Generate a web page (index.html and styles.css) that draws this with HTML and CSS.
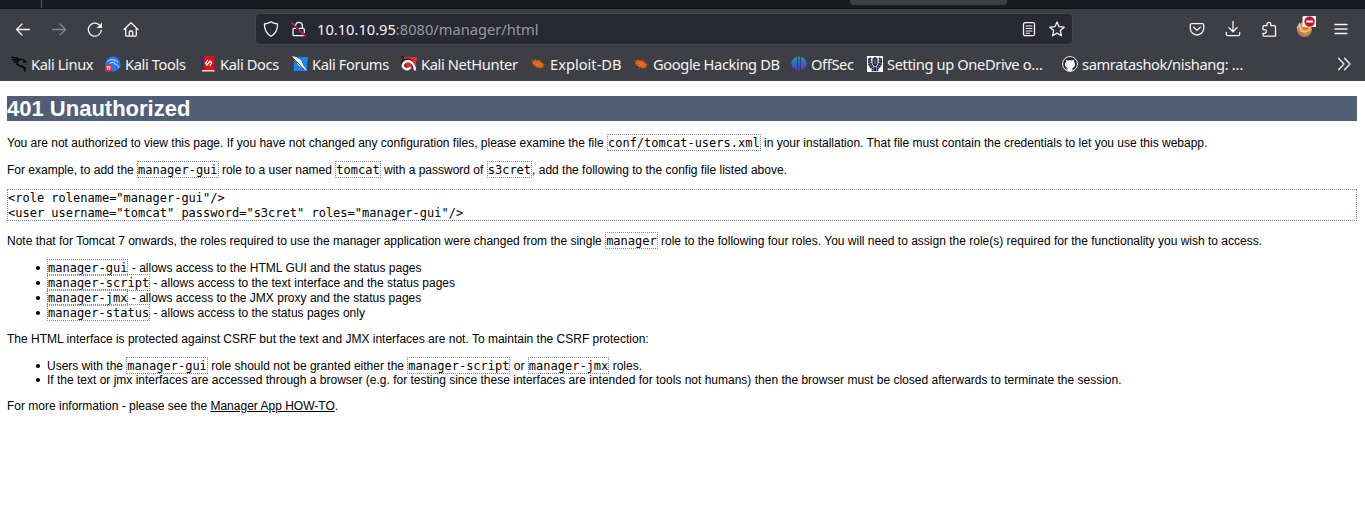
FILE: index.html
```
<!DOCTYPE html>
<html lang="en">
<head>
<meta charset="utf-8">
<title>401 Unauthorized</title>
<link rel="stylesheet" href="styles.css">
</head>
<body>
<header class="chrome">
  <div class="tabstrip"><span class="tab-divider"></span><span class="tab-pill"></span></div>
  <nav class="toolbar">
    <div class="nav-buttons">
      <svg class="icon" viewBox="0 0 16 16"><path d="M14.500 8.500H1.500M7 3 1.500 8.500 7 14"/></svg>
      <svg class="icon dim" viewBox="0 0 16 16"><path d="M1.500 8.500h13M9 3l5.500 5.500L9 14"/></svg>
      <svg class="icon" viewBox="0 0 16 16"><path d="M14.300 9.500A6.500 6.500 0 1 1 12.300 3.900"/><path class="solid" d="M15 1.500v5.500H9.500z"/></svg>
      <svg class="icon" viewBox="0 0 16 16"><path d="M1 8.500 8 1.700l7 6.800M2.700 7.300v7q0 .8.800.8h9q.8 0 .8-.8v-7M6.300 15v-4q0-1 1-1h1.400q1 0 1 1v4"/></svg>
    </div>
    <div class="urlbar">
      <svg class="icon shield" viewBox="0 0 16 16"><path d="M8 .8C6 2.300 3.800 2.700 1.400 3c0 5.300 1.600 9.500 6.600 12.200C13 12.500 14.600 8.300 14.600 3 12.200 2.700 10 2.300 8 .8z"/></svg>
      <svg class="icon lock" viewBox="0 0 16 16"><path d="M4.600 4.200a3.500 3.500 0 0 1 6.800-.2V7M8.500 7.300H12q1.300 0 1.300 1.300v3M4.500 7.300H3.300Q2 7.300 2 8.600v4.800q0 1.300 1.300 1.300h9"/><path class="slash" d="M1 2 14.500 15.500"/></svg>
      <span class="url">10.10.10.95<span class="url-rest">:8080/manager/html</span></span>
      <svg class="icon reader" viewBox="0 0 16 16"><rect x="2.500" y="1.700" width="11" height="13" rx="1.500"/><path d="M5 5h6M5 7.500h6M5 10h6M5 12.300h3.500" stroke-width="1.100"/></svg>
      <svg class="icon star" viewBox="0 0 16 16"><path d="m8 1 2.100 4.700 5.100.5-3.900 3.400 1.200 5.200L8 12.100l-4.500 2.700 1.200-5.200L.8 6.200l5.100-.5z"/></svg>
    </div>
    <div class="tools">
      <svg class="icon" viewBox="0 0 16 16"><path d="M2.700 2.700h10.600q1.400 0 1.400 1.400v3.200a6.700 6.700 0 0 1-13.400 0V4.100q0-1.400 1.400-1.400zM4.700 6.300 8 9.400l3.300-3.100"/></svg>
      <svg class="icon" viewBox="0 0 16 16"><path d="M8 .5v10M4 6.800l4 4 4-4M1.300 11.500v1.700q0 1.500 1.500 1.500h10.400q1.500 0 1.500-1.500v-1.700"/></svg>
      <svg class="icon" viewBox="0 0 16 16"><path d="M2 5.500q0-1.200 1.200-1.200H6V3a1.900 1.900 0 0 1 3.800 0v1.300h3.500q1.200 0 1.200 1.200v9.300H3q-1 0-1-1V12h1.500a1.800 1.800 0 0 0 0-3.600H2z" transform="translate(0 .3)"/></svg>
      <svg class="fox" viewBox="0 0 20 22"><circle cx="8.500" cy="13.500" r="7.500" fill="#c98a50"/><path d="M3 17q4 4 9 2l3-5" fill="none" stroke="#8b8178" stroke-width="1.300"/><path d="m3 9 5 1h6l1 5-4 2-5-1-3-3z" fill="#ff981f"/><path d="M1 12.500 3.500 8l2 7q5 2 7-1l2-3" fill="none" stroke="#d9d0bf" stroke-width="1.300"/><path d="m7 12 4 1 1-1" fill="none" stroke="#b85e1c"/><rect x="6.500" y="0" width="14" height="11" rx="1.500" fill="#fff"/><circle cx="13.600" cy="5.500" r="5.200" fill="#c5142f"/><path d="M10.300 5.500h6.600" stroke="#fff" stroke-width="2"/></svg>
      <svg class="icon" viewBox="0 0 16 16"><path d="M2 3.500h12M2 8h12M2 12.500h12"/></svg>
    </div>
  </nav>
  <div class="bookmarks">
    <span class="bm"><svg class="fav" viewBox="0 0 16 16"><g fill="none" stroke="#08090b" stroke-width="1.400"><path d="M0 1.500c3-.5 6 .2 8.500 2M1 4c3-1.200 5-.9 7.500-.3M3 7c1-2 3-3 5-3"/><path d="M8 3.500c3-.8 4.700.1 6.500 2.200l-2.300.2M8.500 4C5 5.500 5 8.800 8.500 9.500s5 1.500 5.500 6M9 10l4 1.500 2 .5" stroke-width="1.700"/></g></svg>Kali Linux</span>
    <span class="bm"><svg class="fav" viewBox="0 0 16 16"><circle cx="8" cy="8" r="7.500" fill="#2777f4"/><path d="M2.500 5.500C5 3 9 3 13 6M5 7.500c3-2 6-1 4.500.5 3 0 4 2 4.500 4" fill="none" stroke="#d5e7ff" stroke-width="1"/><circle cx="3.500" cy="12" r="3.700" fill="#ed2932"/><path d="M1.500 10.700h4M2.700 10.700V14M4.700 10.700V14" stroke="#fff" stroke-width=".9"/></svg>Kali Tools</span>
    <span class="bm"><svg class="fav" viewBox="0 0 16 16"><path d="M2 0h12.500v15.500H2z" fill="#df1015"/><path d="M2 0h1.600v13H2z" fill="#17337c"/><path d="M2.300 14h12.200v1.500H2z" fill="#e8dfdf"/><path d="M7 5 5.500 7.300 7 9l3-4 1.800 1.800L10.300 9M7 4.500h1M9.500 9.500h1" fill="none" stroke="#fff" stroke-width="1.300"/></svg>Kali Docs</span>
    <span class="bm"><svg class="fav" viewBox="0 0 16 16"><path d="M1.500 1H16l-1.500 14H2z" fill="#1685f2"/><path d="M0 0c4 1 7 2 9.500 5l2 5 4 5-5-3-4-2.500L3 5z" fill="#f3f5f6"/><path d="M0 1l8 8 4 5M1 4l4 3" fill="none" stroke="#222b38" stroke-width=".8"/></svg>Kali Forums</span>
    <span class="bm"><svg class="fav" viewBox="0 0 16 16"><path d="M3 1h13l-2 12H6z" fill="#ef2933"/><path d="M1.500 10C1 3.500 8 2 11 6.500c2 3 1 5 3 7" fill="none" stroke="#111" stroke-width="3"/><path d="M14 14.500C14 10 11 5 7 5S0 9.500 3 12s6 1 6-1" fill="none" stroke="#f5f5f5" stroke-width="2.400"/><path d="M0 1h3M1 3h2" stroke="#111"/></svg>Kali NetHunter</span>
    <span class="bm loose"><svg class="fav" viewBox="0 0 16 16"><ellipse cx="8" cy="8" rx="6" ry="3.400" transform="rotate(25 8 8)" fill="#ef6815"/><path d="m5 3 2 3m3-3 1 4M2 9l4-1m0 5 2-3m2 3 1-3m1-2 4 .5M1 4l4 2m7 4 2 2" stroke="#a4522a" stroke-width=".8"/></svg>Exploit-DB</span>
    <span class="bm"><svg class="fav" viewBox="0 0 16 16"><ellipse cx="8" cy="8" rx="6" ry="3.400" transform="rotate(25 8 8)" fill="#ef6815"/><path d="m5 3 2 3m3-3 1 4M2 9l4-1m0 5 2-3m2 3 1-3m1-2 4 .5M1 4l4 2m7 4 2 2" stroke="#a4522a" stroke-width=".8"/></svg>Google Hacking DB</span>
    <span class="bm"><svg class="fav" viewBox="0 0 16 16"><defs><linearGradient id="os" gradientUnits="userSpaceOnUse" x1="0" y1="0" x2="0" y2="16"><stop stop-color="#17a7b5"/><stop offset=".5" stop-color="#3268c6"/><stop offset="1" stop-color="#6721d8"/></linearGradient></defs><path d="M6 1v13C-1.500 12-1.500 3 6 1zM10 1v13c7.500-2 7.500-11 0-13zM7.200.5h1.600v15H7.200z" fill="url(#os)"/></svg>OffSec</span>
    <span class="bm"><svg class="fav" viewBox="0 0 16 16"><path d="M0 0h16v16H0z" fill="#fff"/><path d="M2 2.500C1 8 3 13 8 13s7-5 6-10.500M3.500 1.500C3 6 4 10 6.500 11.500m6-10C13 6 12 10 9.500 11.500M8 11v4M4.500 14.500h7" fill="none" stroke="#171a3d" stroke-width="1.700" stroke-dasharray="2.200 .4"/><path d="M5.500 2.500 8 1l2.500 1.500V8L8 11 5.500 8z" fill="#171a3d"/><path d="M7.200 3v5m1.600-5v5" stroke="#a9adbf" stroke-width=".6"/></svg>Setting up OneDrive o…</span>
    <span class="bm"><svg class="fav" viewBox="0 0 16 16"><circle cx="8" cy="8" r="7.400" fill="#202126" stroke="#f5f5f6"/><path d="M5.700 14.700v-2.200c-2 .5-2.300-1-3-1.300M5.500 12c-3-.8-3.200-4.500-1.700-6V3.500l2.200 1c1.300-.4 2.700-.4 4 0l2.200-1V6c1.500 1.500 1.300 5.200-1.700 6v3H5.500z" fill="#f5f5f6"/></svg>samratashok/nishang: …</span>
    <svg class="icon more" viewBox="0 0 16 16"><path d="m2.500 2.300 5.500 5.700-5.500 5.700M8.500 2.300 14 8l-5.500 5.700"/></svg>
  </div>
</header>
<main class="page">
  <h1>401 Unauthorized</h1>
  <p>You are not authorized to view this page. If you have not changed any configuration files, please examine the file <code>conf/tomcat-users.xml</code> in your installation. That file must contain the credentials to let you use this webapp.</p>
  <p>For example, to add the <code>manager-gui</code> role to a user named <code>tomcat</code> with a password of <code>s3cret</code>, add the following to the config file listed above.</p>
<pre>&lt;role rolename="manager-gui"/&gt;
&lt;user username="tomcat" password="s3cret" roles="manager-gui"/&gt;</pre>
  <p>Note that for Tomcat 7 onwards, the roles required to use the manager application were changed from the single <code>manager</code> role to the following four roles. You will need to assign the role(s) required for the functionality you wish to access.</p>
  <ul>
    <li><code>manager-gui</code> - allows access to the HTML GUI and the status pages</li>
    <li><code>manager-script</code> - allows access to the text interface and the status pages</li>
    <li><code>manager-jmx</code> - allows access to the JMX proxy and the status pages</li>
    <li><code>manager-status</code> - allows access to the status pages only</li>
  </ul>
  <p>The HTML interface is protected against CSRF but the text and JMX interfaces are not. To maintain the CSRF protection:</p>
  <ul>
    <li>Users with the <code>manager-gui</code> role should not be granted either the <code>manager-script</code> or <code>manager-jmx</code> roles.</li>
    <li>If the text or jmx interfaces are accessed through a browser (e.g. for testing since these interfaces are intended for tools not humans) then the browser must be closed afterwards to terminate the session.</li>
  </ul>
  <p>For more information - please see the <a href="#">Manager App HOW-TO</a>.</p>
</main>
</body>
</html>
```
FILE: styles.css
```
body { margin: 0; background: #fff; color: #000; font: 12px/14px "Liberation Sans", Arial, sans-serif; overflow: hidden; }
.chrome { height: 81px; background: #3e3f44; color: #f5f5f6; font-family: "Noto Sans", sans-serif; }
.tabstrip { height: 9px; box-sizing: border-box; background: #1a1c24; border-bottom: 1px solid #101116; display: flex; }
.tab-divider { width: 1px; height: 8px; margin-left: 41px; background: #55565c; }
.tab-pill { width: 157px; height: 5px; margin-left: 808px; background: #3e3f44; border-radius: 0 0 4px 4px; }
.toolbar { height: 40px; display: flex; align-items: center; }
.icon { width: 16px; height: 16px; flex: none; fill: none; stroke: #f5f5f6; stroke-width: 1.3; stroke-linecap: round; stroke-linejoin: round; }
.icon.dim { stroke: #86878b; }
.icon .solid { fill: #f5f5f6; stroke: none; }
.icon .slash { stroke: #e3204c; stroke-width: 1.4; }
.nav-buttons { display: flex; gap: 20px; width: 240px; padding-left: 15px; }
.urlbar { box-sizing: border-box; width: 818px; height: 32px; display: flex; align-items: center; background: #282934; border: 1px solid #45464f; border-radius: 4px; padding: 0 7px; }
.lock { margin-left: 12px; }
.url { margin-left: 10px; flex: 1; font-size: 14.67px; line-height: 20px; white-space: nowrap; }
.url-rest { color: #98999e; }
.star { margin-left: 12px; }
.tools { display: flex; align-items: center; margin-left: 116px; gap: 20px; }
.fox { width: 20px; height: 22px; margin: -4px -3px 0 -1px; }
.bookmarks { height: 32px; box-sizing: border-box; border-bottom: 1px solid #47474d; display: grid; grid-template-columns: 94px 95px 92px 109px 129px 103px 158px 76px 195px 274px 16px; align-items: center; padding: 0 0 1px 11px; }
.bm { display: flex; align-items: center; gap: 4px; font-size: 14.67px; line-height: 20px; letter-spacing: -.38px; white-space: nowrap; }
.bm.loose { letter-spacing: 0; }
.fav { width: 16px; height: 16px; flex: none; }
.page { padding: 15px 8px 0 7px; }
h1 { margin: 0 0 14px; background: #525d76; color: #fff; font-size: 22px; line-height: 25px; }
p, pre, ul { margin: 0 0 12px; }
p:has(code), li:has(code) { padding-top: 1px; }
ul { padding-left: 40px; list-style: none; }
li::before { content: ""; display: inline-block; width: 4px; height: 4px; margin: 0 7px 2px -11px; border-radius: 50%; background: #000; }
code, pre { border: 1px dotted #8188a0; font: 12px/14px "DejaVu Sans Mono", monospace; }
code { padding-top: 1px; }
pre { height: 29px; padding-top: 1px; line-height: 15px; }
a { color: #000; }
```
